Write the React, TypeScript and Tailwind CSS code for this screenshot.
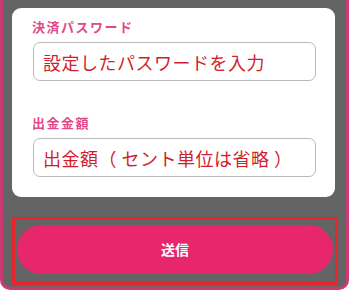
import React from 'react';

const jp = { fontFamily: '"Noto Sans CJK JP", "Noto Sans", sans-serif' };

const Field = ({ label, placeholder, className }: { label: string; placeholder: string; className?: string }) => (
  <div className={className}>
    <div className="pl-[20px] text-[13px] leading-[16px] font-bold text-[#e2488a] tracking-[1.5px]">{label}</div>
    <div className="ml-[21px] mt-[7px] w-[283px] h-[39px] rounded-[7px] border-[1.5px] border-[#b9b9b9] bg-white flex items-center pl-[9px]">
      <span className="text-[18px] leading-none text-[#cf1f2c] tracking-[0.5px]">{placeholder}</span>
    </div>
  </div>
);

export default function App() {
  return (
    <div className="w-[350px] h-[295px] bg-white overflow-hidden" style={jp}>
      <div className="w-[349px] h-[290px] bg-[#646464] border-x-[3px] border-b-[3px] border-[#cc3a73] rounded-b-[10px] pl-[9px] pt-[8px]">
        <div className="w-[323px] h-[189px] bg-white rounded-[9px] pt-[11px]">
          <Field label="決済パスワード" placeholder="設定したパスワードを入力" />
          <Field className="mt-[34px]" label="出金金額" placeholder="出金額（ セント単位は省略 ）" />
        </div>
        <div className="mt-[20px] w-[326px] h-[68px] border-[3px] border-[#e8242c] pt-[5px] px-[2px]">
          <button className="w-[316px] h-[49px] rounded-full bg-[#e8266b] text-white text-[14px] font-bold flex items-center justify-center">
            送信
          </button>
        </div>
      </div>
    </div>
  );
}
